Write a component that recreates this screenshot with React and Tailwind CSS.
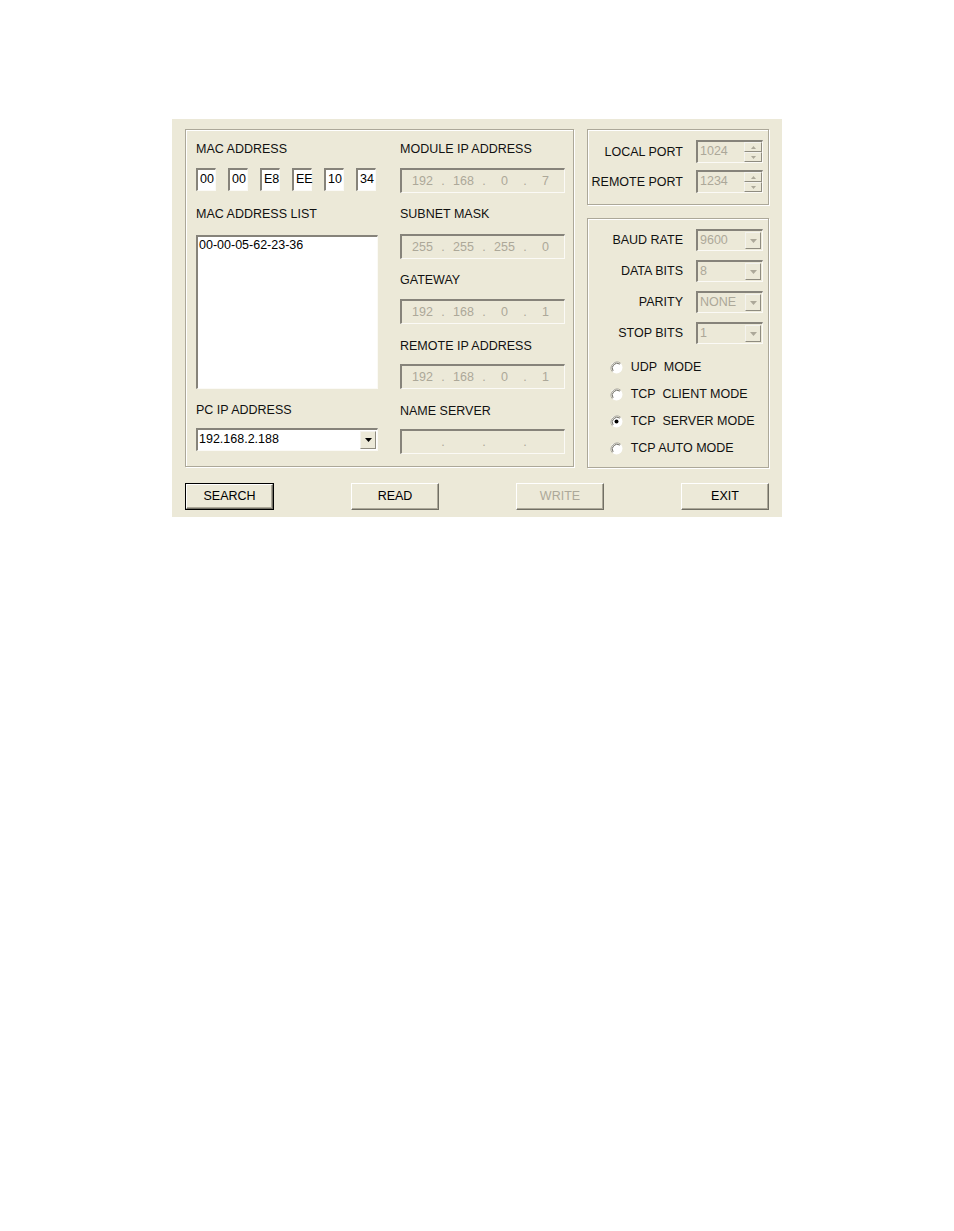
import React from "react";

const font = { fontFamily: '"Liberation Sans", Arial, sans-serif' };

function Group({ className = "", children }) {
  return (
    <div
      className={
        "border border-[#aca899] shadow-[inset_1px_1px_0_#ffffff,1px_1px_0_#ffffff] " +
        className
      }
    >
      {children}
    </div>
  );
}

function Label({ children, className = "" }) {
  return (
    <div className={"h-[16px] leading-[16px] text-[12.5px] text-[#111] whitespace-pre " + className}>
      {children}
    </div>
  );
}

function Sunken({ className = "", children }) {
  return (
    <div
      className={
        "border-t-2 border-l-2 border-b border-r border-t-[#86837a] border-l-[#86837a] border-b-[#fbfaf6] border-r-[#fbfaf6] " +
        className
      }
    >
      {children}
    </div>
  );
}

function Arrow({ color = "#000" }) {
  return (
    <svg width="7" height="4" viewBox="0 0 7 4">
      <path d="M0 0H7L3.5 4Z" fill={color} />
    </svg>
  );
}

function DropBtn({ disabled }) {
  return (
    <div className="w-[16px] h-full flex items-center justify-center bg-[#ece9d8] border border-t-[#f4f3ee] border-l-[#f4f3ee] border-r-[#8f8c80] border-b-[#8f8c80]">
      <Arrow color={disabled ? "#aca899" : "#000"} />
    </div>
  );
}

function IpBox({ parts }) {
  return (
    <Sunken className="h-[25px] w-[165px] bg-[#ece9d8] flex items-center pl-[2px] text-[12.5px] text-[#aca899]">
      {parts.map((p, i) => (
        <React.Fragment key={i}>
          {i > 0 && <span className="w-[4px] text-center">.</span>}
          <span className="w-[37px] text-center">{p}</span>
        </React.Fragment>
      ))}
    </Sunken>
  );
}

function MacBox({ value }) {
  return (
    <Sunken className="w-[20px] h-[23px] bg-white text-[12.5px] leading-[19px] pl-[2px] text-black">
      {value}
    </Sunken>
  );
}

function PortRow({ label, value }) {
  return (
    <div className="flex items-center justify-end">
      <Label className="mr-[13px]">{label}</Label>
      <Sunken className="w-[67px] h-[23px] bg-[#ece9d8] flex items-stretch">
        <span className="flex-1 text-[12.5px] leading-[19px] pl-[2px] text-[#aca899]">{value}</span>
        <div className="w-[18px] flex flex-col">
          <div className="flex-1 flex items-center justify-center border border-t-[#f4f3ee] border-l-[#f4f3ee] border-r-[#8f8c80] border-b-[#8f8c80]">
            <svg width="5" height="3" viewBox="0 0 5 3"><path d="M0 3H5L2.5 0Z" fill="#aca899" /></svg>
          </div>
          <div className="flex-1 flex items-center justify-center border border-t-[#f4f3ee] border-l-[#f4f3ee] border-r-[#8f8c80] border-b-[#8f8c80]">
            <svg width="5" height="3" viewBox="0 0 5 3"><path d="M0 0H5L2.5 3Z" fill="#aca899" /></svg>
          </div>
        </div>
      </Sunken>
    </div>
  );
}

function ComboRow({ label, value }) {
  return (
    <div className="flex items-center justify-end">
      <Label className="mr-[13px]">{label}</Label>
      <Sunken className="w-[67px] h-[22px] bg-[#ece9d8] flex items-stretch">
        <span className="flex-1 text-[12.5px] leading-[18px] pl-[2px] text-[#aca899]">{value}</span>
        <div className="py-[1px] pr-[1px]">
          <DropBtn disabled />
        </div>
      </Sunken>
    </div>
  );
}

function Radio({ label, checked }) {
  return (
    <div className="flex items-center h-[16px]">
      <svg width="13" height="13" viewBox="0 0 13 13" className="mr-[8px]">
        <circle cx="6.5" cy="6.5" r="6" fill="#ffffff" />
        <path d="M2.3 10.7A6 6 0 0 1 10.7 2.3" fill="none" stroke="#a5a293" strokeWidth="1" />
        <path d="M3.1 9.9A4.9 4.9 0 0 1 9.9 3.1" fill="none" stroke="#6e6c62" strokeWidth="1" />
        {checked && <circle cx="6.5" cy="6.5" r="2" fill="#000" />}
      </svg>
      <Label>{label}</Label>
    </div>
  );
}

function Button({ children, isDefault, disabled }) {
  const inner = (
    <div className="w-full h-full flex items-center justify-center border border-t-white border-l-white border-r-[#716f64] border-b-[#716f64] shadow-[inset_-1px_-1px_0_#aca899]">
      <span className={"text-[12.5px] " + (disabled ? "text-[#aca899]" : "text-black")}>{children}</span>
    </div>
  );
  if (isDefault) {
    return <div className="w-[89px] h-[27px] border border-black bg-[#ece9d8]">{inner}</div>;
  }
  return <div className="w-[88px] h-[27px] bg-[#ece9d8]">{inner}</div>;
}

export default function App() {
  return (
    <div className="min-h-screen bg-white pt-[119px] pl-[172px]" style={font}>
      <div className="w-[610px] h-[398px] bg-[#ece9d8] px-[13px] pt-[10px]">
        <div className="flex gap-[13px]">
          <Group className="w-[390px] h-[338px] flex pl-[10px] pt-[11px]">
            <div className="w-[182px] flex flex-col">
              <Label>MAC ADDRESS</Label>
              <div className="mt-[11px] flex gap-[12px]">
                {["00", "00", "E8", "EE", "10", "34"].map((v, i) => (
                  <MacBox key={i} value={v} />
                ))}
              </div>
              <Label className="mt-[15px]">MAC ADDRESS LIST</Label>
              <Sunken className="mt-[13px] h-[154px] bg-white text-[12.5px] pl-[1px] pt-[1px] leading-[15px] text-black">
                00-00-05-62-23-36
              </Sunken>
              <Label className="mt-[13px]">PC IP ADDRESS</Label>
              <Sunken className="mt-[10px] h-[23px] bg-white flex items-stretch">
                <span className="flex-1 text-[12.5px] leading-[19px] pl-[1px] text-black">192.168.2.188</span>
                <div className="py-[1px] pr-[1px]">
                  <DropBtn />
                </div>
              </Sunken>
            </div>
            <div className="ml-[22px] w-[166px] flex flex-col">
              <Label>MODULE IP ADDRESS</Label>
              <div className="mt-[11px]">
                <IpBox parts={["192", "168", "0", "7"]} />
              </div>
              <Label className="mt-[13px]">SUBNET MASK</Label>
              <div className="mt-[12px]">
                <IpBox parts={["255", "255", "255", "0"]} />
              </div>
              <Label className="mt-[13px]">GATEWAY</Label>
              <div className="mt-[11px]">
                <IpBox parts={["192", "168", "0", "1"]} />
              </div>
              <Label className="mt-[14px]">REMOTE IP ADDRESS</Label>
              <div className="mt-[10px]">
                <IpBox parts={["192", "168", "0", "1"]} />
              </div>
              <Label className="mt-[14px]">NAME SERVER</Label>
              <div className="mt-[10px]">
                <IpBox parts={["", "", "", ""]} />
              </div>
            </div>
          </Group>
          <div className="w-[183px] flex flex-col gap-[13px]">
            <Group className="h-[76px] pt-[10px] pr-[5px] flex flex-col gap-[7px]">
              <PortRow label="LOCAL PORT" value="1024" />
              <PortRow label="REMOTE PORT" value="1234" />
            </Group>
            <Group className="h-[250px] pt-[10px] pr-[5px] flex flex-col">
              <div className="flex flex-col gap-[9px]">
                <ComboRow label="BAUD RATE" value="9600" />
                <ComboRow label="DATA BITS" value="8" />
                <ComboRow label="PARITY" value="NONE" />
                <ComboRow label="STOP BITS" value="1" />
              </div>
              <div className="mt-[15px] pl-[22px] flex flex-col gap-[11px]">
                <Radio label="UDP  MODE" />
                <Radio label="TCP  CLIENT MODE" />
                <Radio label="TCP  SERVER MODE" checked />
                <Radio label="TCP AUTO MODE" />
              </div>
            </Group>
          </div>
        </div>
        <div className="mt-[15px] flex justify-between">
          <Button isDefault>SEARCH</Button>
          <Button>READ</Button>
          <Button disabled>WRITE</Button>
          <Button>EXIT</Button>
        </div>
      </div>
    </div>
  );
}
